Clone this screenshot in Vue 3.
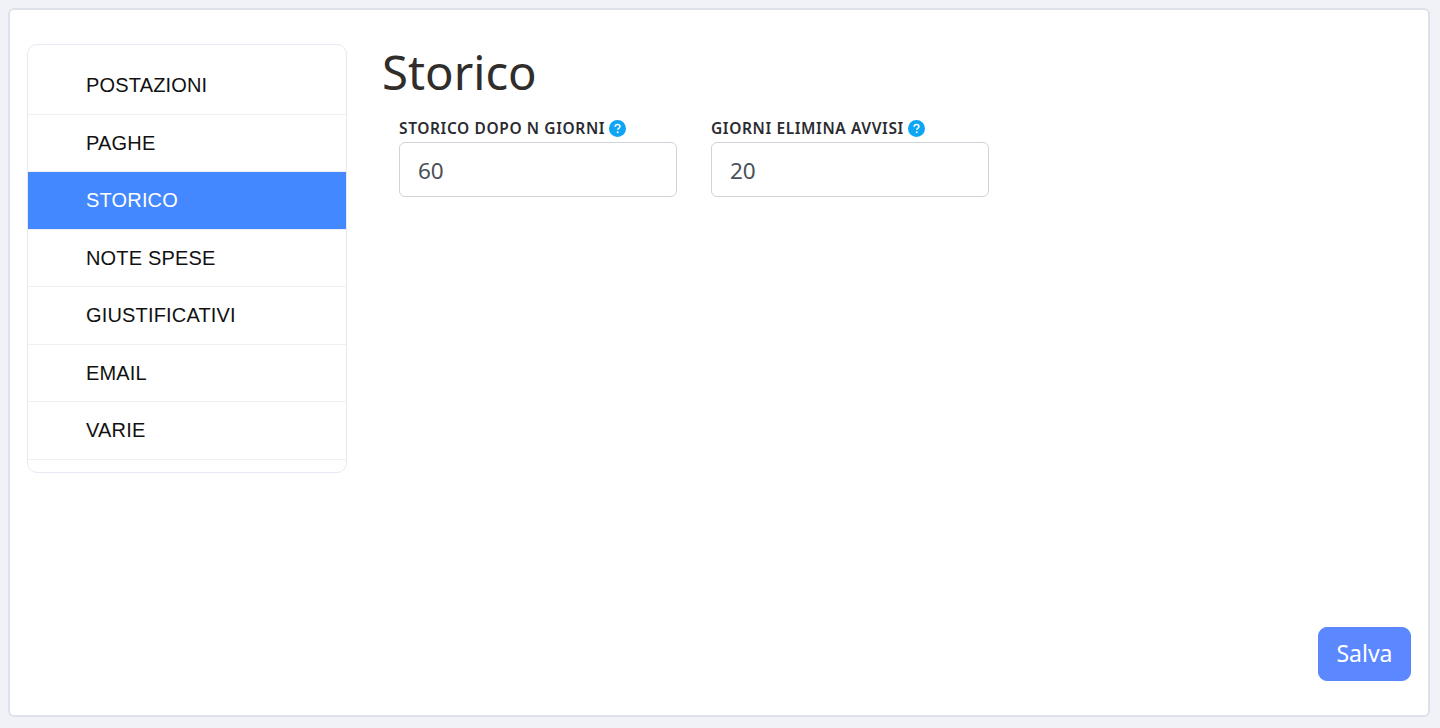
<script setup>
const items = ['POSTAZIONI', 'PAGHE', 'STORICO', 'NOTE SPESE', 'GIUSTIFICATIVI', 'EMAIL', 'VARIE']
const fields = [
  { label: 'STORICO DOPO N GIORNI', value: '60' },
  { label: 'GIORNI ELIMINA AVVISI', value: '20' }
]
</script>

<template>
  <div class="page">
    <div class="card">
      <div class="main">
        <ul class="menu">
          <li v-for="item in items" :key="item" class="item" :class="{ active: item === 'STORICO' }">{{ item }}</li>
        </ul>
        <section class="content">
          <h1 class="title">Storico</h1>
          <div class="fields">
            <div v-for="f in fields" :key="f.label" class="field">
              <label class="label">
                {{ f.label }}
                <svg class="help" width="17" height="17" viewBox="0 0 17 17">
                  <circle cx="8.5" cy="8.5" r="8.5" fill="#0ea5f5" />
                  <path d="M6.2 6.7c0-1.3 1-2.2 2.4-2.2s2.3.8 2.3 2c0 .9-.5 1.4-1.2 1.9-.6.4-.9.7-.9 1.4" fill="none" stroke="#fff" stroke-width="1.6" />
                  <circle cx="8.7" cy="12.3" r="1" fill="#fff" />
                </svg>
              </label>
              <input class="input" type="text" :value="f.value" />
            </div>
          </div>
        </section>
      </div>
      <div class="actions">
        <button class="save" type="button">Salva</button>
      </div>
    </div>
  </div>
</template>

<style>
html, body { margin: 0; background: #f0f2f8; }
</style>

<style scoped>
.page {
  height: 728px;
  box-sizing: border-box;
  padding: 8px 10px 11px 8px;
  background: #f0f2f8;
  font-family: "Noto Sans", sans-serif;
}
.card {
  height: 100%;
  box-sizing: border-box;
  border: 2px solid #dee1ea;
  border-radius: 6px;
  background: #fff;
  padding: 34px 17px 34px 17px;
  display: flex;
  flex-direction: column;
  justify-content: space-between;
}
.main {
  display: flex;
  align-items: flex-start;
  gap: 35px;
}
.menu {
  list-style: none;
  margin: 0;
  padding: 12px 0;
  width: 320px;
  box-sizing: border-box;
  border: 1px solid #e6eaf2;
  border-radius: 10px;
  background: #fff;
}
.item {
  height: 57.5px;
  box-sizing: border-box;
  border-bottom: 1px solid #eef0f4;
  padding-left: 58px;
  font-family: "Liberation Sans", Arial, sans-serif;
  font-size: 20px;
  letter-spacing: 0.17px;
  line-height: 56px;
  color: #111;
}
.item.active {
  background: #4388ff;
  color: #fff;
}
.title {
  margin: 0;
  font-size: 47.3px;
  font-weight: 400;
  line-height: 56px;
  color: #302d2b;
}
.fields {
  display: flex;
  gap: 34px;
  margin-top: 17px;
  padding-left: 17px;
}
.field {
  width: 278px;
}
.label {
  display: flex;
  align-items: center;
  gap: 4px;
  height: 24px;
  margin-bottom: 1px;
  padding-bottom: 2px;
  box-sizing: border-box;
  font-size: 15.5px;
  font-weight: 600;
  letter-spacing: 0.6px;
  color: #2b2b30;
  white-space: nowrap;
}
.help { flex: none; }
.input {
  display: block;
  width: 100%;
  height: 55px;
  box-sizing: border-box;
  border: 1px solid #ced4da;
  border-radius: 6px;
  padding: 2px 18px 0;
  font-family: "Noto Sans", sans-serif;
  font-size: 22.5px;
  color: #495057;
  outline: none;
  background: #fff;
}
.actions {
  display: flex;
  justify-content: flex-end;
}
.save {
  width: 93px;
  height: 54px;
  border: 1px solid #5a86fb;
  border-radius: 9px;
  background: #5c88ff;
  color: #fff;
  font-family: "Noto Sans", sans-serif;
  font-size: 23px;
  padding: 0 0 2px;
}
</style>
